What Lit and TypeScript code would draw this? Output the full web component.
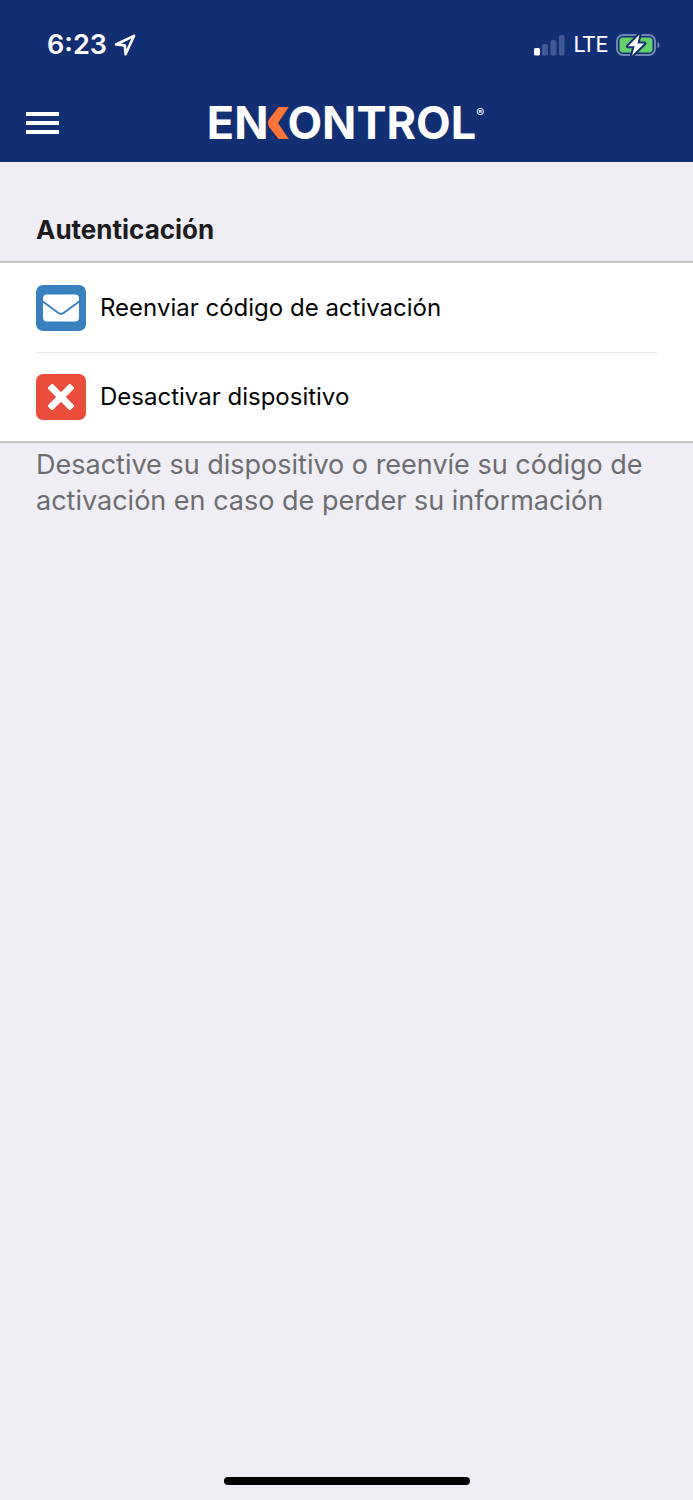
import { LitElement, html, css, svg } from "lit";
import { customElement } from "lit/decorators.js";

const mailIcon = svg`
  <svg class="glyph" viewBox="0 0 36 28" width="36" height="28" aria-hidden="true">
    <path fill="#fff" d="M4 0.5h28a4 4 0 0 1 4 4v2L20.4 18q-2.400 1.700-4.800 0L0 6.500V4.500a4 4 0 0 1 4-4z"/>
    <path fill="#fff" d="M0 8.800L14.800 19.800q3.200 2.200 6.400 0L36 8.800V23.500a4 4 0 0 1-4 4H4a4 4 0 0 1-4-4z"/>
  </svg>`;

const crossIcon = svg`
  <svg class="glyph" viewBox="0 0 26 26" width="26" height="26" aria-hidden="true">
    <path d="M4.200 4.200L21.800 21.800M21.800 4.200L4.200 21.800" stroke="#fff" stroke-width="6.800" stroke-linecap="square" stroke-linejoin="round" fill="none" clip-path="inset(0.500px round 4px)"/>
  </svg>`;

@customElement("status-bar")
class StatusBar extends LitElement {
  static styles = css`
    :host {
      display: flex;
      justify-content: space-between;
      align-items: center;
      height: 90px;
      padding: 0 32px 0 47px;
      color: #fff;
    }
    .group {
      display: flex;
      align-items: center;
    }
    .time {
      font-size: 27px;
      font-weight: 600;
      line-height: 32px;
      margin-right: 7px;
    }
    .network {
      font: 400 22px/28px Roboto, sans-serif;
      margin: 0 8px;
    }
  `;

  render() {
    return html`
      <div class="group">
        <span class="time">6:23</span>
        <svg width="22" height="22" viewBox="0 0 22 22" fill="none" stroke="#fff" stroke-width="2.600" stroke-linejoin="round" aria-label="Ubicación">
          <path d="M20 1.800L2 10.500L10.800 11.400L11.600 20.300z"/>
        </svg>
      </div>
      <div class="group">
        <svg width="31" height="21" viewBox="0 0 31 21" fill="#415a93" aria-label="Señal">
          <rect x="0" y="13" width="6" height="7.500" rx="1.500" fill="#fff"/>
          <rect x="8" y="9" width="6" height="11.500" rx="1.500"/>
          <rect x="16.500" y="5" width="6" height="15.500" rx="1.500"/>
          <rect x="25" y="0" width="5.500" height="20.500" rx="1.500"/>
        </svg>
        <span class="network">LTE</span>
        <svg width="45" height="24" viewBox="0 0 45 24" aria-label="Cargando">
          <rect x="1" y="2" width="38" height="20" rx="6" fill="none" stroke="#7385b0" stroke-width="2"/>
          <path d="M41.500 8.500a4 4 0 0 1 0 7z" fill="#7385b0"/>
          <rect x="3.500" y="4.500" width="33" height="15" rx="3.500" fill="#65d16a"/>
          <path d="M23.500 1.500L12 13.300h6.600L16 22.500L28.300 10.500h-6.800z" fill="#fff" stroke="#122f73" stroke-width="4" paint-order="stroke" stroke-linejoin="round"/>
        </svg>
      </div>
    `;
  }
}

@customElement("brand-logo")
class BrandLogo extends LitElement {
  static styles = css`
    :host {
      display: flex;
      align-items: center;
      color: #fff;
      font-size: 45px;
      font-weight: 700;
      line-height: 44px;
    }
    .chevron {
      display: block;
      margin-right: -2px;
    }
    .mark {
      align-self: flex-start;
      font-size: 12px;
      font-weight: 400;
      line-height: 24px;
    }
  `;

  render() {
    return html`
      <span>EN</span>
      <svg class="chevron" width="21" height="32" viewBox="0 0 21 32" aria-label="K">
        <path fill="#ff7338" d="M10.500 0H20.800L10 16L20.800 32H10.500L1.200 20Q-1.200 16 1.200 12z"/>
      </svg>
      <span>ONTROL</span>
      <span class="mark">®</span>
    `;
  }
}

@customElement("app-root")
class AppRoot extends LitElement {
  static styles = css`
    :host {
      display: flex;
      flex-direction: column;
      min-height: 100vh;
      background: #efeef4;
      font-family: Inter, "Liberation Sans", sans-serif;
      color: #050505;
    }
    .top {
      background: #122f73;
    }
    .nav {
      display: grid;
      grid-template-columns: 1fr auto 1fr;
      align-items: center;
      height: 72px;
      padding: 0 28px 6px 26px;
      box-sizing: border-box;
    }
    .menu {
      display: flex;
      flex-direction: column;
      gap: 5px;
      width: 33px;
      padding: 0;
      border: 0;
      background: none;
    }
    .bar {
      height: 4px;
      width: 100%;
      background: #fff;
    }
    .content {
      flex: 1;
    }
    .title {
      margin: 0;
      padding: 52px 36px 15px;
      font-size: 26px;
      line-height: 32px;
      font-weight: 700;
      color: #1c1c1e;
    }
    .list {
      list-style: none;
      margin: 0;
      padding: 0 36px;
      background: #fff;
      border-top: 2px solid #c4c4c8;
      border-bottom: 2px solid #c4c4c8;
    }
    .item {
      display: flex;
      box-sizing: border-box;
      height: 89px;
    }
    .item + .item {
      border-top: 1px solid #e9e9eb;
    }
    .action {
      display: flex;
      align-items: center;
      gap: 14px;
      width: 100%;
      padding: 0;
      border: 0;
      background: none;
      color: inherit;
      font: 400 24px/32px Inter, "Liberation Sans", sans-serif;
      text-align: left;
    }
    .tile {
      display: grid;
      place-items: center;
      width: 50px;
      height: 46px;
      border-radius: 7px;
    }
    .blue {
      background: #3880be;
    }
    .red {
      background: #eb4d3d;
    }
    .note {
      margin: 0;
      padding: 4px 36px;
      font-size: 27px;
      line-height: 36px;
      color: #6d6d70;
    }
    .home {
      width: 246px;
      height: 8px;
      margin: 0 auto 15px;
      border-radius: 4px;
      background: #000;
    }
  `;

  render() {
    return html`
      <header class="top">
        <status-bar></status-bar>
        <nav class="nav">
          <button class="menu" aria-label="Menú">
            <span class="bar"></span>
            <span class="bar"></span>
            <span class="bar"></span>
          </button>
          <brand-logo></brand-logo>
        </nav>
      </header>
      <main class="content">
        <h1 class="title">Autenticación</h1>
        <ul class="list">
          <li class="item">
            <button class="action">
              <span class="tile blue">${mailIcon}</span>
              <span>Reenviar código de activación</span>
            </button>
          </li>
          <li class="item">
            <button class="action">
              <span class="tile red">${crossIcon}</span>
              <span>Desactivar dispositivo</span>
            </button>
          </li>
        </ul>
        <p class="note">
          Desactive su dispositivo o reenvíe su código de activación en caso de perder su información
        </p>
      </main>
      <div class="home"></div>
    `;
  }
}
